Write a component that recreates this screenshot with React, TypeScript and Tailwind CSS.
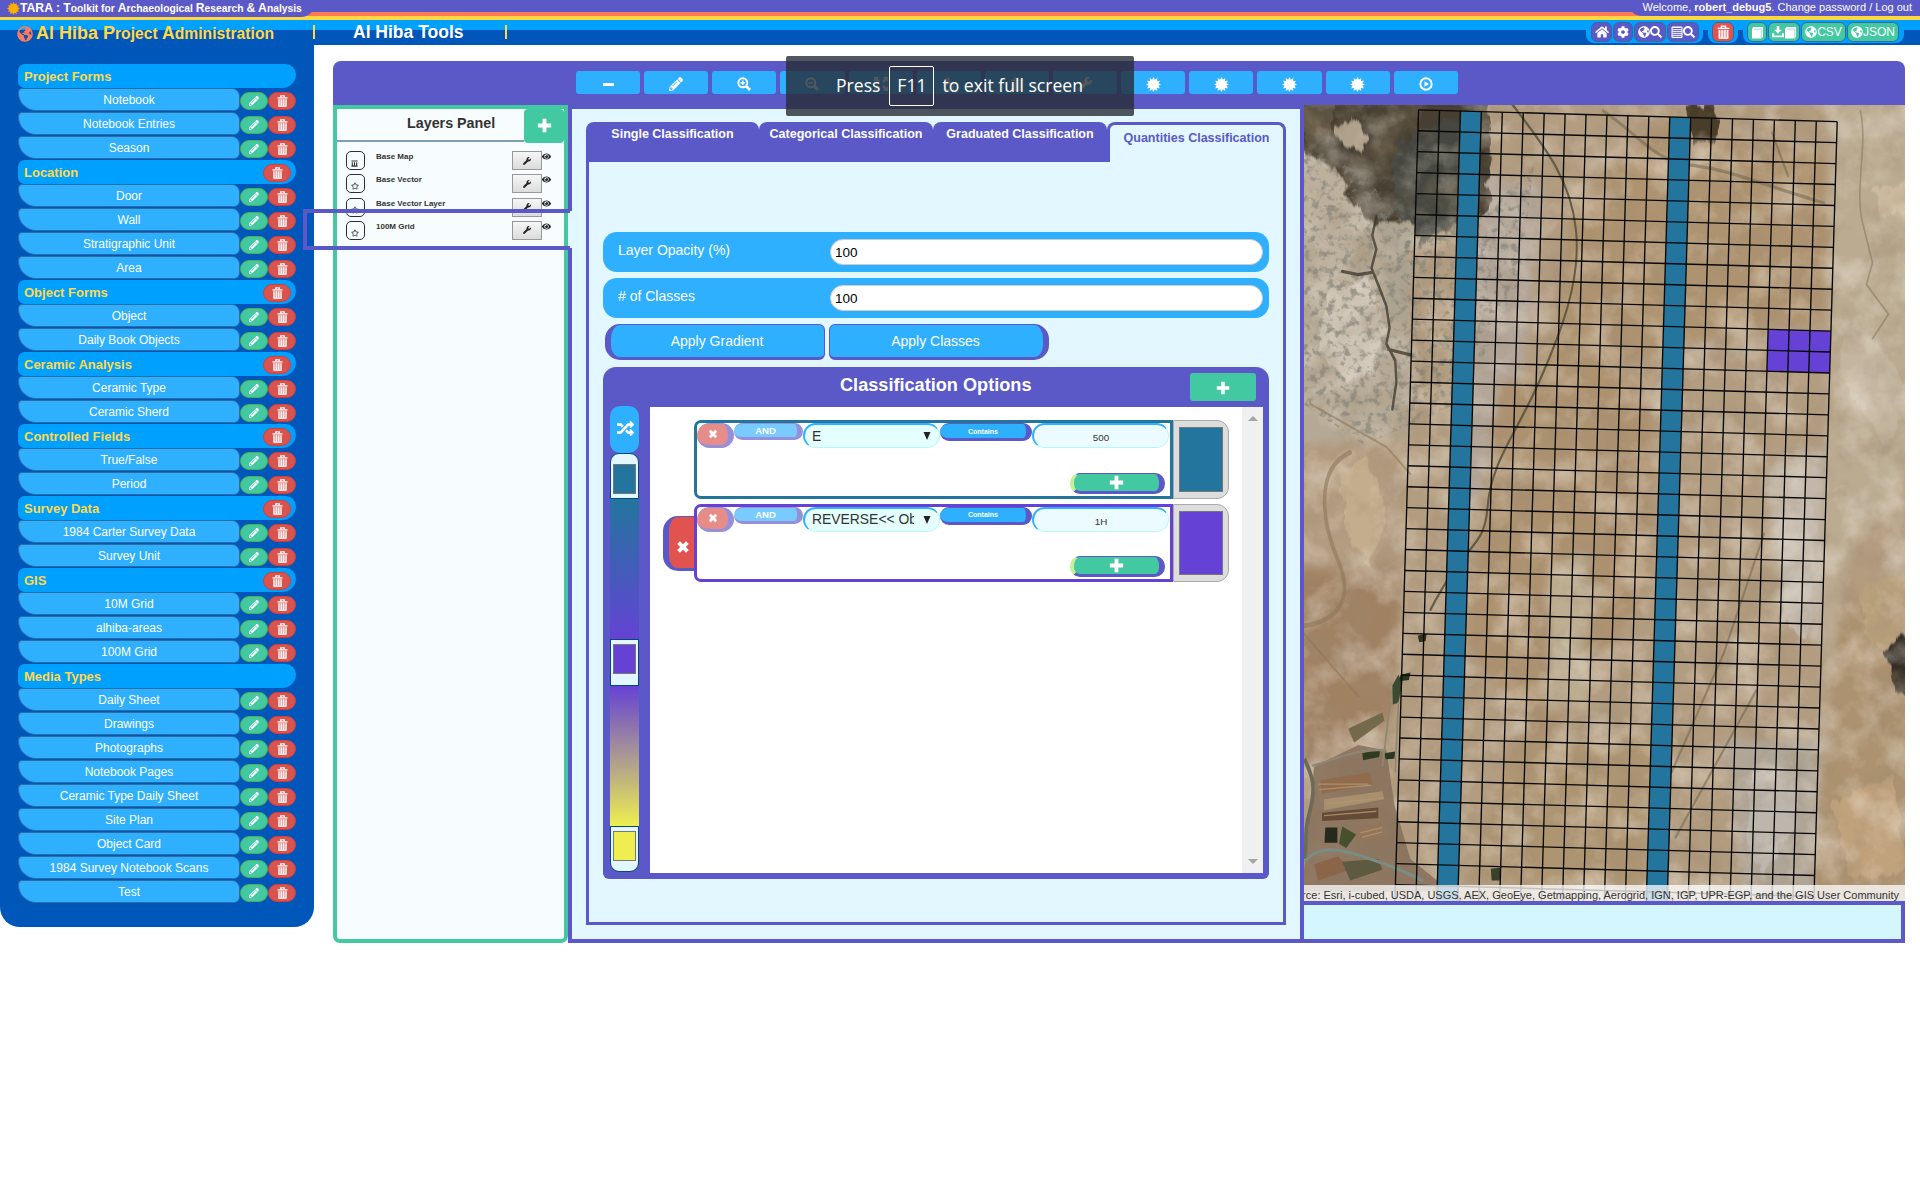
import React from "react";
import {
  FaPencilAlt,
  FaHome,
  FaCog,
  FaGlobeAmericas,
  FaSearch,
  FaRandom,
  FaWrench,
  FaRegStar,
  FaEye,
} from "react-icons/fa";

type IconProps = { className?: string };

const Plus = ({ className }: IconProps) => (
  <svg viewBox="0 0 14 14" fill="currentColor" className={className}>
    <path d="M5.2 .8h3.6v4.4h4.4v3.6H8.800v4.4H5.200V8.800H.8V5.200h4.400z" />
  </svg>
);
const Remove = ({ className }: IconProps) => (
  <svg viewBox="0 0 14 14" fill="currentColor" className={className}>
    <path d="M4 1.200 7 4.200 10 1.200 12.800 4 9.800 7l3 3L10 12.800l-3-3-3 3L1.200 10l3-3-3-3z" />
  </svg>
);
const Trash = ({ className }: IconProps) => (
  <svg viewBox="0 0 11 12" className={className} fill="none" stroke="currentColor">
    <path d="M.5 2.900h10" strokeWidth="1.300" />
    <path d="M3.700 2.500V.9h3.600v1.600" strokeWidth="1.100" />
    <path d="M1.300 4.200h8.400v7.300H1.300z" fill="currentColor" fillOpacity=".45" stroke="none" />
    <path d="M1.900 4.200v7M4.300 4.200v7M6.700 4.200v7M9.100 4.200v7M1.400 11.200h8.200" strokeWidth="1.100" />
  </svg>
);
const ZoomGlass = ({ className, plus }: IconProps & { plus?: boolean }) => (
  <svg viewBox="0 0 14 14" className={className} fill="none" stroke="currentColor">
    <circle cx="5.800" cy="5.800" r="4.500" strokeWidth="1.900" />
    <path d="m9 9 4 4" strokeWidth="2.600" />
    <path d={plus ? "M3.500 5.800h4.600M5.800 3.500v4.600" : "M3.500 5.800h4.600"} strokeWidth="1.600" />
  </svg>
);
const burst = Array.from({ length: 24 }, (_, i) => {
  const r = i % 2 ? 4.7 : 7;
  const a = (i * Math.PI) / 12;
  return `${(7 + r * Math.sin(a)).toFixed(2)},${(7 - r * Math.cos(a)).toFixed(2)}`;
}).join(" ");
const Burst = ({ className }: IconProps) => (
  <svg viewBox="0 0 14 14" fill="currentColor" className={className}>
    <polygon points={burst} />
  </svg>
);
const Play = ({ className }: IconProps) => (
  <svg viewBox="0 0 14 14" className={className}>
    <circle cx="7" cy="7" r="5.700" fill="none" stroke="currentColor" strokeWidth="1.900" />
    <path d="M5.500 4.200 10 7l-4.500 2.800z" fill="currentColor" />
  </svg>
);
const Expand = ({ className }: IconProps) => (
  <svg viewBox="0 0 14 14" fill="currentColor" className={className}>
    <path d="M0 0h5L3.500 1.500 6 4 4 6 1.500 3.500 0 5zM14 0v5l-1.500-1.500L10 6 8 4l2.500-2.500L9 0zM0 14V9l1.500 1.500L4 8l2 2-2.500 2.500L5 14zM14 14H9l1.500-1.500L8 10l2-2 2.500 2.500L14 9z" />
  </svg>
);
const Hand = ({ className }: IconProps) => (
  <svg viewBox="0 0 14 14" className={className} fill="none" stroke="currentColor" strokeWidth="1.500">
    <path d="M5 8V1.500h1.800V6l5 1.500-1 5.500H5L2 8.500z" />
  </svg>
);
const Book = ({ className }: IconProps) => (
  <svg viewBox="0 0 13 13" className={className}>
    <path d="M1 2.500 2.500 1H12v10l-1.500 1.500H1z" fill="currentColor" />
    <path d="M10.300 3.200V12M10.300 3.200H3" stroke="#43c9a2" strokeWidth=".5" fill="none" />
  </svg>
);
const Download = ({ className }: IconProps) => (
  <svg viewBox="0 0 14 14" fill="currentColor" className={className}>
    <path d="M5.500 0h3v4.500h3L7 9 2.500 4.500h3zM0 8.500h2.500V11h9V8.500H14V13H0z" />
  </svg>
);
const ListIcon = ({ className }: IconProps) => (
  <svg viewBox="0 0 12 12" className={className} fill="none" stroke="currentColor">
    <path d="M1 1h10v10.500H1z" strokeWidth="1" />
    <path d="M1 1.500h10M1 3.700h10M1 5.700h10M1 7.700h10M1 9.700h10" strokeWidth="1" />
  </svg>
);
const Grill = ({ className }: IconProps) => (
  <svg viewBox="0 0 8 8" className={className} fill="none" stroke="currentColor">
    <path d="M0.500 1.200h7M.5 7h7M1.500 2.500v4.500M4 2.500v4.500M6.500 2.500v4.500" strokeWidth="1.300" />
  </svg>
);

const sections: { title: string; items: string[] }[] = [
  { title: "Project Forms", items: ["Notebook", "Notebook Entries", "Season"] },
  { title: "Location", items: ["Door", "Wall", "Stratigraphic Unit", "Area"] },
  { title: "Object Forms", items: ["Object", "Daily Book Objects"] },
  { title: "Ceramic Analysis", items: ["Ceramic Type", "Ceramic Sherd"] },
  { title: "Controlled Fields", items: ["True/False", "Period"] },
  { title: "Survey Data", items: ["1984 Carter Survey Data", "Survey Unit"] },
  { title: "GIS", items: ["10M Grid", "alhiba-areas", "100M Grid"] },
  {
    title: "Media Types",
    items: [
      "Daily Sheet",
      "Drawings",
      "Photographs",
      "Notebook Pages",
      "Ceramic Type Daily Sheet",
      "Site Plan",
      "Object Card",
      "1984 Survey Notebook Scans",
      "Test",
    ],
  },
];

const RedPill = () => (
  <button className="flex h-[18px] w-[28px] items-center justify-center rounded-[10px] border border-[#d43f3a] bg-[#d9534f]">
    <Trash className="h-[12px] w-[11px]" />
  </button>
);

function Sidebar() {
  return (
    <aside className="h-[882px] w-[314px] shrink-0 rounded-b-[20px] bg-[#0056b9] pl-[18px] pt-[19px] text-white">
      {sections.map((s, i) => (
        <div key={s.title}>
          <div className="flex h-[24px] w-[278px] items-center justify-between rounded-[8px_12px_16px_8px] bg-[#00a0ff] pl-[6px] pr-[5px]">
            <span className="text-[13px] font-bold leading-none text-[#ffd84a]">{s.title}</span>
            {i > 0 && i < 7 && (
              <span className="mt-px">
                <RedPill />
              </span>
            )}
          </div>
          {s.items.map((t) => (
            <div key={t} className="flex h-[24px] items-center">
              <button className="mb-px h-[23px] w-[222px] rounded-[4px_8px_6px_18px] border border-[#2e6da4] bg-[#2eb0ff] text-center text-[12px] leading-[20px]">
                {t}
              </button>
              <button className="mt-px flex h-[18px] w-[28px] items-center justify-center rounded-[10px] border border-[#4cae4c] bg-[#43c9a2]">
                <FaPencilAlt className="h-[10px] w-[10px]" />
              </button>
              <span className="mt-px">
                <RedPill />
              </span>
            </div>
          ))}
        </div>
      ))}
    </aside>
  );
}

function Header() {
  const btn =
    "flex h-[20px] items-center justify-center rounded-[6px] border border-[#2e6da4] text-[12px] leading-none";
  return (
    <header className="h-[45px] bg-[linear-gradient(#5a59c7_12px,#ff7a59_12px,#ff7a59_16px,#ffd73f_16px,#ffd73f_20px,#00a0ff_20px,#00a0ff_30px,#0056b9_30px)] text-white">
      <div className="flex h-[20px] items-start justify-between">
        <div className="flex h-[17px] w-[315px] items-center rounded-br-[14px] bg-[#5a59c7] pl-[7px] font-bold">
          <Burst className="h-[13px] w-[13px] text-[#ffb000]" />
          <span className="whitespace-nowrap text-[10.300px] leading-none">
            <span className="text-[12.200px]">TARA : T</span>oolkit for <span className="text-[12.200px]">A</span>rchaeological{" "}
            <span className="text-[12.200px]">R</span>esearch <span className="text-[12.200px]">&amp; A</span>nalysis
          </span>
        </div>
        <div className="h-[16px] w-[292px] rounded-bl-[14px] bg-[#5a59c7] pr-[8px] text-right text-[11px] leading-[14px]">
          Welcome, <b>robert_debug5</b>. Change password / Log out
        </div>
      </div>
      <div className="flex h-[25px] items-start">
        <div className="flex w-[313px] items-center pl-[17px] pt-[3px] font-bold text-[#ffd84a]">
          <FaGlobeAmericas className="h-[16px] w-[16px] text-[#ff7a59]" />
          <span className="ml-[3px] whitespace-nowrap text-[15.700px] leading-[21px]">
            <span className="text-[18px]">Al Hiba P</span>roject <span className="text-[17.500px]">A</span>dministration
          </span>
        </div>
        <div className="mt-[5px] flex h-[14px] w-[194px] items-center justify-between border-x-2 border-[#ffd84a] pl-[38px] text-[17.500px] font-bold">
          <span className="whitespace-nowrap">Al Hiba Tools</span>
        </div>
        <div className="ml-auto mr-[16px] flex gap-[5px]">
          <div className="flex h-[23px] gap-px rounded-b-[8px] bg-[#00a0ff] pl-[5px] pr-[4px] pt-[2px]">
            <button className={`${btn} w-[21px] bg-[#5a59c7]`}>
              <FaHome className="h-[14px] w-[14px]" />
            </button>
            <button className={`${btn} w-[20px] bg-[#5a59c7]`}>
              <FaCog className="h-[12px] w-[12px]" />
            </button>
            <button className={`${btn} w-[32px] bg-[#5a59c7]`}>
              <FaGlobeAmericas className="h-[12px] w-[12px]" />
              <FaSearch className="h-[12px] w-[12px]" />
            </button>
            <button className={`${btn} w-[32px] bg-[#5a59c7]`}>
              <ListIcon className="h-[12px] w-[12px]" />
              <FaSearch className="h-[12px] w-[12px]" />
            </button>
          </div>
          <div className="flex h-[23px] rounded-b-[8px] bg-[#00a0ff] px-[4px] pt-[2px]">
            <button className={`${btn} w-[22px] bg-[#e0534f]`}>
              <Trash className="h-[14px] w-[13px]" />
            </button>
          </div>
          <div className="flex h-[23px] gap-px rounded-b-[8px] bg-[#00a0ff] pl-[4px] pr-[5px] pt-[2px]">
            <button className={`${btn} w-[20px] bg-[#43c9a2]`}>
              <Book className="h-[13px] w-[13px]" />
            </button>
            <button className={`${btn} w-[32px] bg-[#43c9a2]`}>
              <Download className="h-[12px] w-[12px]" />
              <Book className="h-[13px] w-[13px]" />
            </button>
            <button className={`${btn} w-[45px] bg-[#43c9a2]`}>
              <FaGlobeAmericas className="h-[12px] w-[12px]" />
              CSV
            </button>
            <button className={`${btn} w-[52px] bg-[#43c9a2]`}>
              <FaGlobeAmericas className="h-[12px] w-[12px]" />
              JSON
            </button>
          </div>
        </div>
      </div>
    </header>
  );
}

const tools: React.ReactNode[] = [
  <span className="h-[3px] w-[11px] bg-white" />,
  <FaPencilAlt className="h-[14px] w-[14px]" />,
  <ZoomGlass plus className="h-[14px] w-[14px]" />,
  <ZoomGlass className="h-[14px] w-[14px]" />,
  <Expand className="h-[14px] w-[14px]" />,
  <Hand className="h-[14px] w-[14px]" />,
  <Trash className="h-[14px] w-[13px]" />,
  <FaWrench className="h-[14px] w-[14px]" />,
  <Burst className="h-[15px] w-[15px]" />,
  <Burst className="h-[15px] w-[15px]" />,
  <Burst className="h-[15px] w-[15px]" />,
  <Burst className="h-[15px] w-[15px]" />,
  <Play className="h-[14px] w-[14px]" />,
];

function Toolbar() {
  return (
    <div className="flex h-[44px] gap-[4px] rounded-t-[8px] bg-[#5a59c7] pl-[243px] pt-[10px] text-white">
      {tools.map((t, i) => (
        <button key={i} className="flex h-[23px] w-[64.150px] items-center justify-center rounded-[3px] bg-[#2eb0ff] pt-[3px]">
          {t}
        </button>
      ))}
    </div>
  );
}

const layers = ["Base Map", "Base Vector", "Base Vector Layer", "100M Grid"];

function LayersPanel() {
  return (
    <section className="h-[838px] w-[235px] shrink-0 rounded-b-[7px] border-4 border-[#43c9a2] bg-[#f7fdff]">
      <div className="flex h-[34px] items-start">
        <h2 className="h-[33px] w-[187px] border-b-2 border-[#819db5] pl-[70px] text-[14.300px] font-bold leading-[28px] text-[#333]">
          <span className="whitespace-nowrap">Layers Panel</span>
        </h2>
        <button className="flex h-[34px] w-[40px] items-center justify-center rounded-[4px] bg-[#43c9a2] pb-[2px] text-white">
          <Plus className="h-[15px] w-[15px]" />
        </button>
      </div>
      <ul className="mt-[8px] pl-[9px]">
        {layers.map((l, i) => (
          <li key={l} className="flex h-[23.300px] items-start">
            <span className="flex h-[19px] w-[19px] items-end justify-center rounded-[5px] border border-[#2b2b44] pb-[2px] pr-[2px] text-[#333]">
              {i === 0 ? <Grill className="h-[7px] w-[7px]" /> : <FaRegStar className="h-[8px] w-[8px]" />}
            </span>
            <span className="ml-[11px] w-[136px] whitespace-nowrap pt-px text-[8px] font-bold leading-[10px] text-[#333]">{l}</span>
            <button className="flex h-[19px] w-[30px] items-center justify-center border border-[#999] bg-linear-to-b from-[#f6f6f6] to-[#dcdcdc]">
              <FaWrench className="h-[8px] w-[8px] text-[#222]" />
            </button>
            <FaEye className="mt-px h-[9px] w-[9px] text-[#222]" />
          </li>
        ))}
      </ul>
    </section>
  );
}

const FieldRow = ({ label }: { label: string }) => (
  <label className="mb-[6px] flex h-[40px] rounded-[14px] bg-[#2eb0ff] pl-[15px] pt-[7px]">
    <span className="w-[212px] pt-px text-[14px] leading-[20px] text-white">{label}</span>
    <input
      readOnly
      value="100"
      className="h-[26px] w-[433px] rounded-[13px] border border-[#ccc] bg-white pl-[4px] text-[13.500px] text-black outline-none"
    />
  </label>
);

const ColorStop = ({ color, shape }: { color: string; shape: string }) => (
  <div className={`flex w-[29px] flex-col border border-[#04477c] bg-[#e2f7ff] px-[2px] ${shape}`}>
    <span className="h-[30px] border border-[#777]" style={{ backgroundColor: color }} />
  </div>
);

function Rule({ color, frame, field, value, removable }: { color: string; frame: string; field: string; value: string; removable?: boolean }) {
  return (
    <div className="mb-[5px] flex h-[78.500px]">
      <div className="flex w-[31px] shrink-0 pt-[12px]">
        {removable && (
          <button className="flex h-[55px] w-[31px] items-center justify-center rounded-l-[15px] border-b-[3px] border-l-[6px] border-t border-[#5a59c7] bg-[#e0534f] pl-[2px] pt-[9px] text-white">
            <Remove className="h-[14px] w-[14px]" />
          </button>
        )}
      </div>
      <div className={`flex w-[479px] flex-col justify-between rounded-l-[7px] border-[3px] ${frame}`}>
        <div className="flex items-start text-white">
          <button className="flex h-[25px] w-[37px] justify-center rounded-[13px] border-b-[3px] border-r-[6px] border-t border-[#9690da] bg-[#e68d8a] pl-px pt-[5px]">
            <Remove className="h-[10px] w-[10px]" />
          </button>
          <button className="h-[17px] w-[69px] rounded-[9px] border-b-[3px] border-r-[6px] border-t border-[#9690da] bg-[#78caff] text-[9.500px] font-bold leading-[13px]">
            AND
          </button>
          <div className="flex h-[25px] w-[137px] items-center justify-between rounded-[13px] border border-l-2 border-t-2 border-[#b5f8fb] border-l-[#2eb0ff] border-t-[#2eb0ff] bg-[#e5ffff] pl-[7px] pr-[8px] text-[13.900px] text-[#333]">
            <span className="w-[102px] overflow-hidden whitespace-nowrap">{field}</span>
            <svg viewBox="0 0 8 8" className="h-[8px] w-[8px]">
              <path d="M.5 0h7L4 8z" fill="#222" />
            </svg>
          </div>
          <button className="h-[18px] w-[92px] rounded-[9px] border-b-[3px] border-r-[6px] border-t border-[#5a59c7] bg-[#2eb0ff] text-[7px] font-bold leading-[13px]">
            Contains
          </button>
          <div className="h-[25px] w-[137px] rounded-[13px] border border-l-2 border-t-2 border-[#b5f8fb] border-l-[#2eb0ff] border-t-[#2eb0ff] bg-[#ecfbff] text-center text-[9.800px] leading-[25px] text-[#333]">
            {value}
          </div>
        </div>
        <button className="mb-[2px] mr-[5px] flex h-[21px] w-[95px] items-center justify-center self-end rounded-[10px] border-b-[3px] border-l-4 border-r-[6px] border-t border-[#5a59c7] border-l-[#c5f09a] bg-[#43c9a2] text-white">
          <Plus className="h-[15px] w-[15px]" />
        </button>
      </div>
      <div className="w-[56px] rounded-r-[12px] border border-[#aaa] bg-[#ddd] px-[5px] py-[6px]">
        <div className="h-full border border-[#777]" style={{ backgroundColor: color }} />
      </div>
    </div>
  );
}

function ClassificationOptions() {
  return (
    <section className="mt-[7px] h-[512px] rounded-[13px_13px_6px_6px] bg-[#5a59c7]">
      <div className="flex h-[40px] justify-end pr-[13px] pt-[6px]">
        <h2 className="w-[350px] text-[18.150px] font-bold leading-[24px] text-white">Classification Options</h2>
        <button className="flex h-[28px] w-[66px] items-center justify-center rounded-[3px] bg-[#43c9a2] pt-px text-white">
          <Plus className="h-[14px] w-[14px]" />
        </button>
      </div>
      <div className="flex h-[466px]">
        <div className="-mt-px flex w-[47px] flex-col pl-[7px]">
          <button className="flex h-[47px] w-[29px] items-center justify-center rounded-[10px] bg-[#2eb0ff] pb-[3px] pl-[2px] text-white">
            <FaRandom className="h-[17px] w-[17px]" />
          </button>
          <ColorStop color="#23759e" shape="h-[46px] rounded-t-[9px] pt-[10px]" />
          <div className="h-[140px] w-[29px] bg-[linear-gradient(#23759e,#5350c6_75%,#6542d5)]" />
          <ColorStop color="#6542d5" shape="h-[47px] pt-[4px]" />
          <div className="h-[140px] w-[29px] bg-[linear-gradient(#6542d5,#eeee50)]" />
          <ColorStop color="#eeee50" shape="h-[46px] rounded-b-[9px] pt-[4px]" />
        </div>
        <div className="flex w-[613px] bg-white">
          <div className="w-[592px] pl-[13px] pt-[13px]">
            <Rule color="#23759e" frame="border-[#23759e]" field="E" value="500" />
            <Rule color="#6542d5" frame="border-[#6542d5]" field="REVERSE<< Ob" value="1H" removable />
          </div>
          <div className="flex w-[21px] flex-col items-center justify-between bg-[#f0f0f0] py-[9px]">
            <svg viewBox="0 0 10 5" className="h-[5px] w-[10px]">
              <path d="M5 0l5 5H0z" fill="#a3a3a3" />
            </svg>
            <svg viewBox="0 0 10 5" className="h-[5px] w-[10px]">
              <path d="M0 0h10L5 5z" fill="#a3a3a3" />
            </svg>
          </div>
        </div>
      </div>
    </section>
  );
}

function ClassificationPanel() {
  return (
    <section className="h-[838px] w-[736px] shrink-0 border-4 border-[#5a59c7] bg-[#e2f7ff] px-[14px] pt-[13px]">
      <div className="flex h-[40px] text-[12.500px] font-bold text-white">
        <div className="w-[173px] rounded-t-[8px] bg-[#5a59c7] pt-[3px] text-center">Single Classification</div>
        <div className="w-[174px] rounded-t-[8px] bg-[#5a59c7] pt-[3px] text-center">Categorical Classification</div>
        <div className="w-[174px] rounded-t-[8px] bg-[#5a59c7] pt-[3px] text-center">Graduated Classification</div>
        <div className="w-[179px] rounded-t-[8px] border-x-[3px] border-t-[3px] border-[#5a59c7] pt-[4px] text-center text-[#5a59c7]">
          Quantities Classification
        </div>
      </div>
      <div className="h-[763px] border-x-[3px] border-b-[3px] border-[#5a59c7] pl-[14px] pr-[14px] pt-[70px]">
        <FieldRow label="Layer Opacity (%)" />
        <FieldRow label="# of Classes" />
        <div className="flex h-[36px] gap-[4px] pl-[2px] text-[14px] text-white">
          <button className="w-[220px] rounded-[15px_6px_6px_15px] border-b-[3px] border-l-[6px] border-r border-t border-[#5a59c7] bg-[#2eb0ff] pr-px">
            Apply Gradient
          </button>
          <button className="w-[220px] rounded-[6px_15px_15px_6px] border-b-[3px] border-l border-r-[6px] border-t border-[#5a59c7] bg-[#2eb0ff] pr-[2px]">
            Apply Classes
          </button>
        </div>
        <ClassificationOptions />
      </div>
    </section>
  );
}

const OX = 114.6;
const OY = 4.800;
const at = (c: number, r: number) => [OX + c * 20.930 - r * 0.627, OY + c * 0.595 + r * 20.940] as const;
const quad = (c0: number, r0: number, c1: number, r1: number) =>
  [at(c0, r0), at(c1, r0), at(c1, r1), at(c0, r1)].map((p) => p.join(",")).join(" ");

function SurveyMap() {
  return (
    <svg viewBox="0 0 601 796" className="h-[796px] w-[601px]">
      <defs>
        <filter id="rough" x="-10%" y="-10%" width="120%" height="120%">
          <feTurbulence type="fractalNoise" baseFrequency=".03" numOctaves="5" seed="4" result="n" />
          <feDisplacementMap in="SourceGraphic" in2="n" scale="38" xChannelSelector="R" yChannelSelector="G" result="d" />
          <feGaussianBlur in="d" stdDeviation="1.500" />
        </filter>
        <filter id="soft" x="-20%" y="-20%" width="140%" height="140%">
          <feTurbulence type="fractalNoise" baseFrequency=".03" numOctaves="3" seed="9" result="n" />
          <feDisplacementMap in="SourceGraphic" in2="n" scale="36" xChannelSelector="R" yChannelSelector="G" result="d" />
          <feGaussianBlur in="d" stdDeviation="9" />
        </filter>
        <filter id="grainDark" x="0" y="0" width="100%" height="100%">
          <feTurbulence type="fractalNoise" baseFrequency=".03" numOctaves="6" seed="12" />
          <feColorMatrix values="0 0 0 0 .33  0 0 0 0 .25  0 0 0 0 .16  1.900 0 0 0 -.85" />
        </filter>
        <filter id="grainLight" x="0" y="0" width="100%" height="100%">
          <feTurbulence type="fractalNoise" baseFrequency=".026" numOctaves="6" seed="31" />
          <feColorMatrix values="0 0 0 0 .9  0 0 0 0 .84  0 0 0 0 .75  0 2 0 0 -.9" />
        </filter>
        <filter id="specks" x="0" y="0" width="100%" height="100%">
          <feTurbulence type="fractalNoise" baseFrequency=".13" numOctaves="4" seed="7" result="t" />
          <feColorMatrix in="t" values="0 0 0 0 .24  0 0 0 0 .23  0 0 0 0 .19  4.500 0 0 0 -2.250" result="c" />
          <feComposite in="c" in2="SourceGraphic" operator="in" />
        </filter>
        <clipPath id="view">
          <rect width="601" height="796" />
        </clipPath>
      </defs>
      <g clipPath="url(#view)">
        <rect width="601" height="796" fill="#b39d81" />
        <g transform="scale(.40177 .54201) translate(-35 -9)">
          <g filter="url(#soft)">
            <path d="M-40 60 300 240 300 620 0 640z" fill="#b5a995" />
            <path d="M480 130 640 160 560 560 430 800 400 500z" fill="#b3a699" />
            <path d="M700 200 920 40 1340 100 1340 400 1000 440 720 520 600 700z" fill="#ae936f" />
            <path d="M520 520 900 500 900 900 620 1200 440 1000z" fill="#ad9270" />
            <path d="M560 1180 900 1180 880 1440 440 1440z" fill="#ae9572" />
            <path d="M1340 0 1600 0 1600 640 1400 820 1330 1100z" fill="#bbab91" />
            <path d="M1180 680 1330 640 1320 1000 1230 960z" fill="#c2b7a8" />
            <path d="M1080 1180 1320 1180 1300 1460 1130 1460z" fill="#b0a698" />
            <path d="M640 860 740 840 740 1120 640 1130z" fill="#bdad91" />
            <path d="M0 860 280 860 260 1130 40 1240z" fill="#a08263" />
            <path d="M1370 930 1600 880 1600 1480 1300 1480z" fill="#ac9270" />
          </g>
          <g filter="url(#rough)">
            <path d="M-20 -40 500 -40 495 200 330 265 290 230 240 240 170 200 110 130 -20 85z" fill="#463f33" />
            <path d="M265 80 420 30 430 210 330 265 255 190z" fill="#454640" />
            <path d="M25 -10 120 0 100 70 40 80z" fill="#5d5242" />
            <path d="M120 50 165 40 195 68 170 92 125 82z" fill="#b0a18c" />
            <path d="M30 90 100 130 190 215 170 280 90 300 30 250z" fill="#bdb19e" />
            <path d="M90 350 190 330 240 420 210 500 140 520 70 470z" fill="#cdc4b4" />
            <path d="M225 220 310 225 290 420 250 400z" fill="#aca390" />
            <path d="M120 680 190 660 240 760 200 860 150 810z" fill="#c3ad8c" />
            <path d="M985 10 1060 12 1070 60 1010 80z" fill="#493c2b" />
            <path d="M1450 170 1580 130 1580 210 1470 215z" fill="#cdbba0" />
            <path d="M1400 400 1500 480 1560 560 1480 640 1360 500z" fill="#c4b59f" />
            <path d="M1410 900 1600 860 1560 1000 1440 1010z" fill="#b9a07c" />
            <path d="M1490 1010 1600 960 1600 1110 1500 1090z" fill="#352e26" />
            <path d="M1220 760 1260 700 1310 780 1290 1000 1230 960z" fill="#c6bcb0" />
            <path d="M1150 1240 1260 1230 1260 1330 1180 1440 1140 1360z" fill="#bdb6ad" />
            <path d="M1350 1300 1500 1240 1540 1420 1400 1440z" fill="#c0a27c" />
          </g>
        </g>
        <rect width="601" height="796" filter="url(#grainDark)" opacity=".5" />
        <rect width="601" height="796" filter="url(#grainLight)" opacity=".5" />
        <path d="M0 40 60 70 110 130 110 260 170 250 150 300 60 340 0 300z" filter="url(#specks)" opacity=".7" />
        <path d="M100 130 190 100 230 60 215 180 170 270 110 270z" filter="url(#specks)" opacity=".7" />
        <g transform="scale(.40177 .54201) translate(-35 -9)" fill="none" strokeLinecap="round">
          <path
            d="M215 215 205 250 215 275 203 310 222 345 240 380 248 420 240 450 262 480 265 520 255 570M205 318 170 322 130 316M245 460 300 470"
            stroke="#3b372c"
            strokeWidth="6"
            opacity=".75"
          />
          <path d="M545 0C640 90 700 150 712 240S680 420 620 520 500 670 492 750 440 810 350 940" stroke="#565039" strokeWidth="5" opacity=".85" />
          <path d="M780 20C880 70 900 110 1000 120S1150 150 1330 190" stroke="#6b6048" strokeWidth="6" opacity=".5" />
          <path d="M1420 20C1440 90 1400 170 1430 240L1450 300 1435 340 1490 395 1450 440" stroke="#897a5f" strokeWidth="4" opacity=".6" />
          <path d="M1200 60 1240 140M950 1240 1080 1020 1180 800M960 1360 1160 1090" stroke="#675d44" strokeWidth="5" opacity=".5" />
          <path d="M150 650C60 680 80 780 120 850S120 960 36 970" stroke="#8d7658" strokeWidth="9" opacity=".6" />
          <path d="M50 560 240 640 300 690M30 980 170 1100" stroke="#8d7658" strokeWidth="4" opacity=".6" />
        </g>
        <g transform="scale(.40177 .54201) translate(-35 -9)">
          <path d="M60 1230 170 1190 240 1200 260 1300 300 1400 400 1460 30 1460z" fill="#86705a" opacity=".85" />
          {[
            ["M75 1255 200 1240 205 1262 80 1280z", "#916c4c"],
            ["M85 1290 230 1275 235 1290 85 1310z", "#a8906f"],
            ["M80 1315 220 1305 220 1325 80 1330z", "#654b36"],
            ["M88 1342 118 1342 118 1370 86 1370z", "#252a1c"],
            ["M130 1340 165 1355 140 1380 122 1372z", "#46502f"],
            ["M170 1345 235 1330 230 1360 165 1370z", "#93765a"],
            ["M145 1160 230 1130 235 1145 160 1185z", "#74694a"],
            ["M180 1205 225 1198 222 1212 182 1218z", "#2e3a22"],
            ["M235 1205 262 1202 260 1215 238 1216z", "#2b3720"],
            ["M255 1080 270 1060 280 1075 270 1112 256 1115z", "#3c4b30"],
            ["M275 1060 300 1056 296 1070 272 1072z", "#26351d"],
            ["M318 988 340 984 338 998 322 1000z", "#2d331f"],
            ["M60 1410 120 1395 150 1420 70 1440z", "#8b654a"],
            ["M500 1418 525 1416 522 1440 502 1440z", "#38412a"],
            ["M130 1405 220 1400 230 1420 150 1440z", "#5d5a40"],
          ].map(([d, f]) => (
            <path key={d} d={d} fill={f} />
          ))}
          <path d="M70 1262h125M72 1272l130-8M90 1298l140-10M85 1320l130-8M175 1352l55-10M180 1360l50-10" stroke="#b39673" strokeWidth="2.500" fill="none" opacity=".8" />
          <path d="M36 1215C50 1240 68 1260 50 1310S45 1370 36 1400" stroke="#6d6b58" strokeWidth="9" fill="none" />
          <path d="M36 1405C70 1375 120 1380 180 1395S280 1420 330 1440" stroke="#7b8c84" strokeWidth="6" fill="none" />
          <path d="M55 1228C120 1215 170 1195 240 1200M250 1110 230 1230M270 1110 262 1240" stroke="#8f8672" strokeWidth="4" fill="none" />
        </g>
        <polygon points={quad(2, 0, 3, 38)} fill="#23759e" />
        <polygon points={quad(12, 0, 13, 38)} fill="#23759e" />
        <polygon points={quad(17, 10, 20, 12)} fill="#6542d5" />
        <g stroke="#080808" strokeWidth="1.350">
          {Array.from({ length: 21 }, (_, c) => {
            const [x1, y1] = at(c, 0);
            const [x2, y2] = at(c, 38);
            return <line key={`c${c}`} x1={x1} y1={y1} x2={x2} y2={y2} />;
          })}
          {Array.from({ length: 39 }, (_, r) => {
            const [x1, y1] = at(0, r);
            const [x2, y2] = at(20, r);
            return <line key={`r${r}`} x1={x1} y1={y1} x2={x2} y2={y2} />;
          })}
        </g>
      </g>
    </svg>
  );
}

function MapPanel() {
  return (
    <section className="flex h-[838px] w-[601px] flex-col">
      <div className="relative h-[796px] overflow-hidden">
        <SurveyMap />
        <div className="absolute bottom-0 right-0 flex h-[16px] w-full justify-end overflow-hidden bg-white/75 pr-[6px] text-[11px] leading-[20px] text-[#333]">
          <span className="whitespace-nowrap">
            Source: Esri, i-cubed, USDA, USGS, AEX, GeoEye, Getmapping, Aerogrid, IGN, IGP, UPR-EGP, and the GIS User Community
          </span>
        </div>
      </div>
      <div className="h-[42px] border-b-4 border-r-4 border-t-4 border-[#5a59c7] bg-[#d4f6ff]" />
    </section>
  );
}

export default function App() {
  return (
    <div className="relative h-[1200px] w-[1920px] overflow-hidden bg-white font-['Liberation_Sans',Arial,sans-serif]">
      <Header />
      <div className="flex">
        <Sidebar />
        <main className="ml-[19px] mt-[16px] w-[1572px]">
          <Toolbar />
          <div className="flex">
            <LayersPanel />
            <ClassificationPanel />
            <MapPanel />
          </div>
        </main>
      </div>

      {/* selected layer outline, joined to the classification panel */}
      <div className="absolute left-[568px] top-[211px] h-[37px] w-[4px] bg-[#e2f7ff]" />
      <div className="absolute left-[303px] top-[209px] h-[41px] w-[267px] rounded-r-[3px] border-y-4 border-l-4 border-[#5a59c7]" />

      {/* browser full screen notice */}
      <div className="absolute left-[786px] top-[56px] flex h-[60px] w-[348px] items-center rounded-[2px] bg-[#272c34]/80 pl-[50px] font-['Open_Sans',sans-serif] text-[17.600px] text-white">
        <span className="-mt-[2px]">Press</span>
        <span className="ml-[9px] flex h-[40px] w-[45px] items-center justify-center rounded-[2px] border border-white pb-[2px]">F11</span>
        <span className="-mt-[2px] ml-[8px] whitespace-nowrap">to exit full screen</span>
      </div>
    </div>
  );
}
